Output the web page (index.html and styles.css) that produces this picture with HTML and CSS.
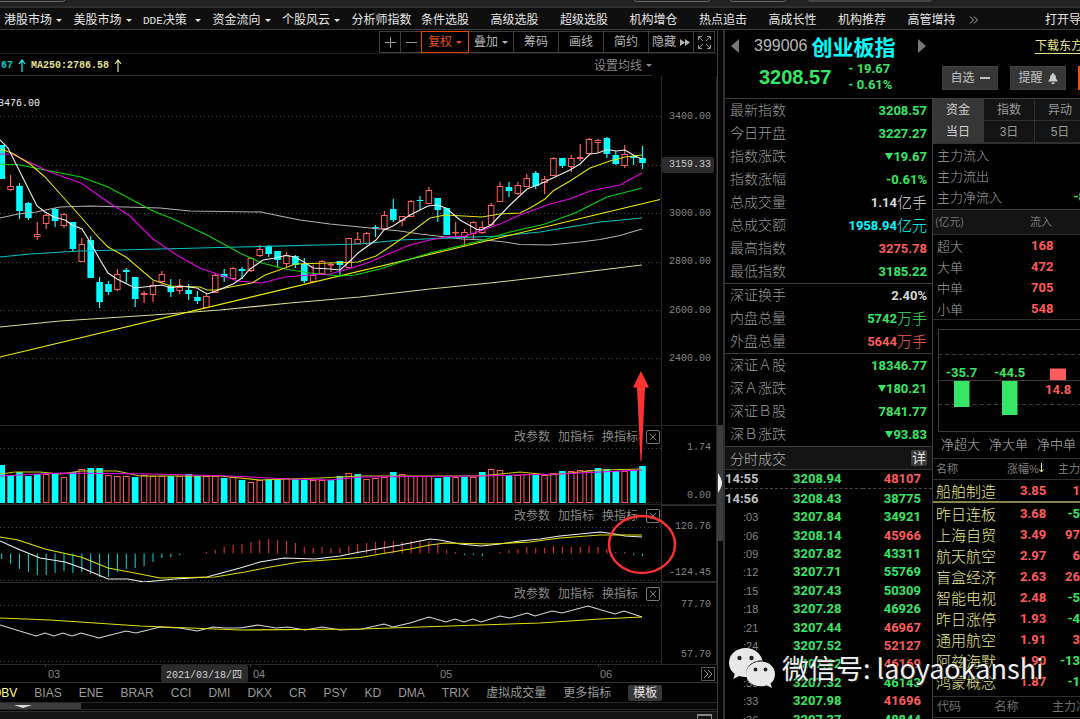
FILE: index.html
```html
<!DOCTYPE html>
<html lang="zh-CN">
<head>
<meta charset="utf-8">
<title>创业板指 399006</title>
<link rel="stylesheet" href="styles.css">
</head>
<body>
<div class="app">
  <div class="topstrip"><i class="notch notch-a"></i><i class="notch notch-b"></i><i class="notch notch-c"></i><i class="notch notch-d"></i></div>
  <nav class="nav">
    <ul class="nav-list">
      <li><a href="#">港股市场</a><i class="caret"></i></li>
      <li><a href="#">美股市场</a><i class="caret"></i></li>
      <li class="wide"><a href="#"><span class="mono">DDE</span>决策</a><i class="caret"></i></li>
      <li><a href="#">资金流向</a><i class="caret"></i></li>
      <li><a href="#">个股风云</a><i class="caret"></i></li>
      <li><a href="#">分析师指数</a></li>
      <li><a href="#">条件选股</a></li>
      <li><a href="#">高级选股</a></li>
      <li><a href="#">超级选股</a></li>
      <li><a href="#">机构增仓</a></li>
      <li><a href="#">热点追击</a></li>
      <li><a href="#">高成长性</a></li>
      <li><a href="#">机构推荐</a></li>
      <li class="last"><a href="#">高管增持</a>
        <svg class="more" viewBox="0 0 10 8"><path d="M1 0.5L4.5 4L1 7.5M5 0.5L8.5 4L5 7.5"/></svg></li>
    </ul>
    <a class="nav-open" href="#">打开导航</a>
  </nav>

  <main class="main">
    <section class="left">
      <div class="toolbar">
        <button class="tool sq" aria-label="放大"><svg viewBox="0 0 11 11"><path d="M5.5 0V11M0 5.5H11"/></svg></button>
        <button class="tool sq" aria-label="缩小"><svg viewBox="0 0 11 11"><path d="M0 5.5H11"/></svg></button>
        <button class="tool active">复权<i class="caret"></i></button>
        <button class="tool">叠加<i class="caret"></i></button>
        <button class="tool">筹码</button>
        <button class="tool">画线</button>
        <button class="tool">简约</button>
        <button class="tool">隐藏<svg class="ff" viewBox="0 0 10 7"><path d="M0 0L5 3.5L0 7ZM5 0L10 3.5L5 7Z"/></svg></button>
        <button class="tool sq" aria-label="全屏"><svg class="full" viewBox="0 0 13 13"><path d="M0.5 4V0.5H4M9 0.5H12.5V4M12.5 9V12.5H9M4 12.5H0.5V9M1 1L5 5M12 1L8 5M12 12L8 8M1 12L5 8"/></svg></button>
      </div>
      <div class="ma-row">
        <span class="ma ma-cyan">67</span><svg class="up up-cyan" viewBox="0 0 8 13"><path d="M4 13V1M1 5L4 1L7 5"/></svg>
        <span class="ma ma-pale">MA250:2786.58</span><svg class="up up-pale" viewBox="0 0 8 13"><path d="M4 13V1M1 5L4 1L7 5"/></svg>
        <button class="ma-set">设置均线<i class="caret"></i></button>
      </div>

      <div class="charts">
        <div class="panel">
          <div class="plot"><svg id="k" viewBox="0 76 661 349"></svg><span class="high mono">3476.00</span></div>
          <div class="axis axis-k mono"><span>3400.00</span><span class="tag">3159.33</span><span>3000.00</span><span>2800.00</span><span>2600.00</span><span>2400.00</span></div>
        </div>
        <div class="panel">
          <div class="plot"><svg id="v" viewBox="0 426 661 78"></svg>
            <div class="acts"><button>改参数</button><button>加指标</button><button>换指标</button><button class="x" aria-label="关闭"><svg viewBox="0 0 9 9"><path d="M1 1L8 8M8 1L1 8"/></svg></button></div></div>
          <div class="axis mono"><span>1.74</span><span>0.00</span></div>
        </div>
        <div class="panel">
          <div class="plot"><svg id="m" viewBox="0 505 661 77"></svg>
            <div class="acts"><button>改参数</button><button>加指标</button><button>换指标</button><button class="x" aria-label="关闭"><svg viewBox="0 0 9 9"><path d="M1 1L8 8M8 1L1 8"/></svg></button></div></div>
          <div class="axis selected mono"><span>120.76</span><span>-124.45</span></div>
        </div>
        <div class="panel">
          <div class="plot"><svg id="r" viewBox="0 583 661 81"></svg>
            <div class="acts"><button>改参数</button><button>加指标</button><button>换指标</button><button class="x" aria-label="关闭"><svg viewBox="0 0 9 9"><path d="M1 1L8 8M8 1L1 8"/></svg></button></div></div>
          <div class="axis axis-r mono"><span>77.70</span><span>57.70</span></div>
        </div>
        <svg class="marks" viewBox="0 76 661 588">
          <path d="M641 371L649 387.5H645L641.5 461H640.5L637 387.5H633Z" fill="#ff3232"/>
          <ellipse cx="642" cy="544.5" rx="33" ry="28.5" fill="none" stroke="#ff3232" stroke-width="2.4"/>
        </svg>
      </div>

      <div class="dates">
        <svg class="dates-plot" viewBox="0 665 661 17">
          <path d="M45.5 665V667M250.5 665V667M437.5 665V667M598.5 665V667" stroke="#444"/>
          <rect x="161" y="665" width="87" height="17" rx="2" fill="#2b2b2b"/>
          <text x="48" y="678">03</text><text x="253" y="678">04</text><text x="440" y="678">05</text><text x="600" y="678">06</text>
          <text x="166" y="678" class="picked">2021/03/18/四</text>
        </svg>
        <button class="next" aria-label="更多"><svg viewBox="0 0 10 8"><path d="M1 0L5 4L1 8M5 0L9 4L5 8"/></svg></button>
      </div>
      <div class="tabs">
        <button class="on">OBV</button><button>BIAS</button><button>ENE</button><button>BRAR</button><button>CCI</button><button>DMI</button><button>DKX</button><button>CR</button><button>PSY</button><button>KD</button><button>DMA</button><button>TRIX</button><button>虚拟成交量</button><button>更多指标</button><button class="tpl">模板</button>
      </div>
      <div class="hscroll"><div class="hthumb"><i class="caret"></i></div></div>
      <div class="bottom"><i class="winbox"></i></div>
    </section>

    <div class="vscroll"><div class="vthumb"><svg viewBox="0 0 4 20"><path d="M0 0C2 3 4 7 4 10S2 17 0 20Z"/></svg></div></div>

    <section class="side">
      <header class="quote">
        <div class="q-left">
          <div class="q-name"><i class="tri-l"></i><span class="code">399006</span><h1>创业板指</h1><i class="tri-r"></i></div>
          <div class="q-price"><strong>3208.57</strong><div class="chg"><span>- 19.67</span><span>- 0.61%</span></div></div>
        </div>
        <div class="q-right">
          <a class="dl" href="#">下载东方财富</a>
          <div class="q-btns"><button>自选<i class="minus"></i></button><button>提醒<svg viewBox="0 0 10 11"><path d="M5 0C5.800 0 6 .7 6 1.300C8 2 8 4 8 5.500L10 8.500H0L2 5.500C2 4 2 2 4 1.300C4 .7 4.200 0 5 0ZM3.500 9.500H6.500V11H3.500Z"/></svg></button><button class="hot" aria-label="交易"></button></div>
        </div>
      </header>

      <div class="cols">
        <div class="mid">
          <dl class="stats">
            <div><dt>最新指数</dt><dd class="g">3208.57</dd></div>
            <div><dt>今日开盘</dt><dd class="g">3227.27</dd></div>
            <div><dt>指数涨跌</dt><dd class="g"><i class="down"></i>19.67</dd></div>
            <div><dt>指数涨幅</dt><dd class="g">-0.61%</dd></div>
            <div><dt>总成交量</dt><dd>1.14<em>亿手</em></dd></div>
            <div><dt>总成交额</dt><dd class="c">1958.94<em>亿元</em></dd></div>
            <div><dt>最高指数</dt><dd class="r">3275.78</dd></div>
            <div><dt>最低指数</dt><dd class="g">3185.22</dd></div>
          </dl>
          <dl class="stats">
            <div><dt>深证换手</dt><dd>2.40%</dd></div>
            <div><dt>内盘总量</dt><dd class="g">5742<em>万手</em></dd></div>
            <div><dt>外盘总量</dt><dd class="r">5644<em>万手</em></dd></div>
          </dl>
          <dl class="stats">
            <div><dt>深证Ａ股</dt><dd class="g">18346.77</dd></div>
            <div><dt>深Ａ涨跌</dt><dd class="g"><i class="down"></i>180.21</dd></div>
            <div><dt>深证Ｂ股</dt><dd class="g">7841.77</dd></div>
            <div><dt>深Ｂ涨跌</dt><dd class="g"><i class="down"></i>93.83</dd></div>
          </dl>
          <div class="ticks-head"><h2>分时成交</h2><button>详</button></div>
          <table class="ticks">
            <tr class="dash"><th>14:55</th><td>3208.94</td><td class="r">48107</td></tr>
            <tr><th>14:56</th><td>3208.43</td><td>38775</td></tr>
            <tr><th class="s">:03</th><td>3207.84</td><td>34921</td></tr>
            <tr><th class="s">:06</th><td>3208.14</td><td class="r">45966</td></tr>
            <tr><th class="s">:09</th><td>3207.82</td><td>43311</td></tr>
            <tr><th class="s">:12</th><td>3207.71</td><td>55769</td></tr>
            <tr><th class="s">:15</th><td>3207.43</td><td>50309</td></tr>
            <tr><th class="s">:18</th><td>3207.28</td><td>46926</td></tr>
            <tr><th class="s">:21</th><td>3207.44</td><td class="r">46967</td></tr>
            <tr><th class="s">:24</th><td>3207.52</td><td class="r">52127</td></tr>
            <tr><th class="s">:27</th><td>3207.82</td><td class="r">46169</td></tr>
            <tr><th class="s">:30</th><td>3207.32</td><td>46143</td></tr>
            <tr><th class="s">:33</th><td>3207.98</td><td class="r">41696</td></tr>
            <tr><th class="s">:36</th><td>3207.37</td><td>48844</td></tr>
          </table>
        </div>

        <div class="far">
          <div class="grid-tabs">
            <button class="on">资金</button><button>指数</button><button>异动</button>
            <button class="on">当日</button><button>3日</button><button>5日</button>
          </div>
          <dl class="flows">
            <div><dt>主力流入</dt><dd></dd></div>
            <div><dt>主力流出</dt><dd></dd></div>
            <div><dt>主力净流入</dt><dd class="g">-8</dd></div>
          </dl>
          <table class="orders">
            <tr class="head"><th>(亿元)</th><th>流入</th><th></th></tr>
            <tr><th>超大</th><td>168</td><td></td></tr>
            <tr><th>大单</th><td>472</td><td></td></tr>
            <tr><th>中单</th><td>705</td><td></td></tr>
            <tr><th>小单</th><td>548</td><td></td></tr>
          </table>
          <div class="bars">
            <svg viewBox="0 0 143 103" width="143" height="103">
              <path d="M143 0.500H0.500V102.500H143M0 51.500H143" fill="none" stroke="#3c3c3c"/>
              <path d="M0 25.500H143M0 75.500H143" fill="none" stroke="#3c3c3c" stroke-dasharray="4 3"/>
              <path d="M16 52h15.500v26H16zM64 52h15.500v34H64z" fill="#38e666"/>
              <path d="M112 39.500h16v11.500h-16z" fill="#ff5c5c"/>
              <text x="8" y="48" fill="#38e666">-35.7</text><text x="56" y="48" fill="#38e666">-44.5</text><text x="107" y="65" fill="#ff5c5c">14.8</text>
            </svg>
            <div class="bar-names"><span>净超大</span><span>净大单</span><span>净中单</span></div>
          </div>
          <table class="sectors">
            <tr class="head"><th>名称</th><th>涨幅%<svg viewBox="0 0 5 10"><path d="M2.500 0V9M0.500 6.500L2.500 9L4.500 6.500"/></svg></th><th>主力</th></tr>
            <tr class="sel"><th>船舶制造</th><td>3.85</td><td>1</td></tr>
            <tr><th>昨日连板</th><td>3.68</td><td class="g">-5</td></tr>
            <tr><th>上海自贸</th><td>3.49</td><td>97</td></tr>
            <tr><th>航天航空</th><td>2.97</td><td>6</td></tr>
            <tr><th>盲盒经济</th><td>2.63</td><td>26</td></tr>
            <tr><th>智能电视</th><td>2.48</td><td class="g">-5</td></tr>
            <tr><th>昨日涨停</th><td>1.93</td><td class="g">-4</td></tr>
            <tr><th>通用航空</th><td>1.91</td><td>3</td></tr>
            <tr><th>阿兹海默</th><td>1.90</td><td class="g">-13</td></tr>
            <tr><th>鸿蒙概念</th><td>1.87</td><td class="g">-1</td></tr>
          </table>
          <div class="foot"><span>代码</span><span>名称</span><span>主力净</span></div>
        </div>
      </div>

      <div class="wechat">
        <svg viewBox="0 0 46 40">
          <path d="M17 0C7 0 0 6.600 0 15C0 19.500 2.200 23.200 5.800 26L4.300 31L10.200 28C12.300 28.700 14.600 29 17 29H18C15 19 23 12 33.500 12.500C31.500 5 25 0 17 0Z" fill="#e8e8e8"/>
          <path d="M32 13.500C23.500 13.500 17 19 17 26S23.500 38.300 32 38.300C34 38.300 36 38 37.500 37.300L43 40L41.500 35.500C44.500 33.300 46 30 46 26C46 19 40 13.500 32 13.500Z" fill="#e8e8e8"/>
          <g fill="#222"><circle cx="10.500" cy="10" r="2.200"/><circle cx="22.500" cy="10" r="2.200"/><circle cx="26.500" cy="21.500" r="1.900"/><circle cx="36.500" cy="21.500" r="1.900"/></g>
        </svg>
        <span>微信号: laoyaokanshi</span>
      </div>
    </section>
  </main>
</div>
<script src="chart.js"></script>
</body>
</html>
```

FILE: styles.css
```css
* { box-sizing: border-box; }
body { margin: 0; background: #000; color: #c0c0c0; font: 12px/16px "Liberation Sans", "Noto Sans CJK SC", sans-serif; }
button { margin: 0; padding: 0; border: 0; background: none; color: inherit; font: inherit; white-space: nowrap; cursor: pointer; }
a { color: inherit; text-decoration: none; }
ul, dl, dd, h1, h2 { margin: 0; padding: 0; font-weight: 400; }
svg { display: block; }
table { border-collapse: collapse; border-spacing: 0; }
th, td { padding: 0; font-weight: 400; text-align: left; white-space: nowrap; }
.mono { font-family: "Liberation Mono", "Noto Sans CJK SC", monospace; font-size: 10px; }
.g { color: #38e666; }
.r { color: #ff5c5c; }
.c { color: #00ffff; }

.app { height: 100vh; overflow: hidden; display: flex; flex-direction: column; }
.topstrip { flex: none; height: 8px; background: #222; border-bottom: 2px solid #303030; position: relative; }
.notch { position: absolute; top: -8px; height: 10px; border: 1px solid #666; border-radius: 5px; }
.notch-a { left: -10px; width: 77px; }
.notch-b { left: 632px; width: 80px; }
.notch-c { left: 728px; width: 60px; }
.notch-d { left: 806px; width: 128px; background: #444; border-color: #444; }

.nav { flex: none; height: 22px; display: flex; align-items: center; background: #0e0e0e; border-bottom: 1px solid #3c3c3c; padding: 3px 0 0 4px; color: #e4e4e4; overflow: hidden; }
.nav-list { flex: 1; display: grid; grid-template-columns: repeat(14, minmax(0, 1fr)); list-style: none; }
.nav li { display: flex; align-items: center; gap: 4px; white-space: nowrap; }
.nav .wide { gap: 8px; }
.nav .last { gap: 13px; }
.nav .mono { font-size: 11px; }
.nav-open { width: 35px; margin-left: 68px; white-space: nowrap; }
.more { width: 10px; height: 8px; flex: none; fill: none; stroke: #aaa; }
.caret { display: inline-block; flex: none; border: 3px solid transparent; border-top-color: currentColor; border-bottom: 0; }

.main { flex: 1; min-height: 0; display: grid; grid-template-columns: minmax(0, 1fr) 8px 355px; }
.left { min-width: 0; overflow: hidden; }

.toolbar { display: flex; justify-content: flex-end; height: 24px; padding: 1px 2px 1px 0; border-bottom: 1px solid #1c1c1c; }
.tool { width: 46px; height: 22px; display: flex; align-items: center; justify-content: center; gap: 4px; border: 1px solid #3c3c3c; margin-right: -1px; color: #b4b4b4; }
.tool:last-child { margin-right: 0; }
.tool.sq { width: 22px; }
.tool.sq svg { width: 11px; height: 11px; fill: none; stroke: #999; }
.tool.sq .full { width: 13px; height: 13px; }
.tool.active { width: 48px; border-color: #e04800; color: #e85020; position: relative; }
.tool .ff { width: 10px; height: 7px; fill: #b4b4b4; }

.ma-row { display: flex; align-items: center; height: 22px; margin-right: 65px; padding-top: 2px; border-bottom: 1px solid #303030; }
.ma { font: 700 10px/16px "Liberation Mono", monospace; }
.ma-cyan { color: #00c8c8; padding-left: 1px; }
.ma-pale { color: #e0e090; margin-left: 5px; }
.up { width: 8px; height: 13px; margin-left: 5px; fill: none; stroke-width: 1.2; }
.up-cyan { stroke: #00ffff; }
.up-pale { stroke: #e0e090; }
.ma-set { margin-left: auto; display: flex; align-items: center; gap: 4px; color: #888; }

.charts { position: relative; }
.panel { display: grid; grid-template-columns: minmax(0, 1fr) 56px; border-bottom: 1px solid #262626; }
.plot { position: relative; }
.plot > svg, .dates-plot { width: 100%; height: auto; }
.high { position: absolute; left: -2px; top: 20px; color: #f0f0f0; }
.axis { display: flex; flex-direction: column; justify-content: space-between; align-items: flex-end; padding: 14px 5px 0 0; color: #858585; border: 0 solid #262626; border-width: 0 1px; }
.axis-k { padding-top: 33px; padding-bottom: 58px; }
.axis-r { padding-bottom: 1px; }
.axis.selected { border: 1px solid #303030; padding-top: 13px; }
.tag { background: #2c2c2c; color: #c8c8c8; border-radius: 2px; margin-right: -3px; padding: 0 3px 0 7px; }
.acts { position: absolute; right: 1px; top: 3px; display: flex; align-items: center; gap: 8px; color: #888; }
.acts .x { width: 14px; height: 14px; border: 1px solid #777; border-radius: 2px; padding: 2px; }
.acts .x svg { width: 8px; height: 8px; fill: none; stroke: #888; }
.marks { position: absolute; left: 0; top: 0; width: calc(100% - 56px); overflow: visible; pointer-events: none; }

.dates { display: grid; grid-template-columns: minmax(0, 1fr) 56px; border-bottom: 1px solid #303030; align-items: center; }
.dates text { font: 11px "Liberation Sans", sans-serif; fill: #858585; }
.dates .picked { font: 10px "Liberation Mono", "Noto Sans CJK SC", monospace; fill: #d0d0d0; }
.next { justify-self: end; width: 14px; height: 14px; margin-right: 2px; padding: 2px 1px; border: 1px solid #555; }
.next svg { width: 10px; height: 8px; fill: none; stroke: #999; }
.tabs { display: flex; align-items: center; gap: 17px; height: 20px; border-bottom: 1px solid #262626; color: #999; margin-left: -8px; overflow: hidden; }
.tabs .on { color: #ffff80; }
.tabs .tpl { background: #363636; color: #e0e0e0; border-radius: 2px; padding: 0 5px; }
.hscroll { height: 7px; background: #080808; border-bottom: 1px solid #262626; }
.hthumb { width: 81px; height: 6px; background: #3c3c3c; padding-left: 14px; display: flex; align-items: center; color: #ddd; }
.hthumb .caret { border-left-width: 9px; border-right-width: 9px; }
.bottom { height: 16px; background: #141414; border-top: 1px solid #303030; margin-top: 1px; display: flex; justify-content: flex-end; padding: 2px 5px 0 0; }
.winbox { width: 15px; height: 12px; border: 1px solid #888; border-top-width: 2px; }

.vscroll { background: #050505; border-left: 1px solid #3c3c3c; border-right: 2px solid #303030; display: flex; flex-direction: column; justify-content: flex-start; padding-top: 395px; overflow: hidden; }
.vthumb { height: 116px; flex: none; background: #3c3c3c; display: flex; align-items: center; }
.vthumb svg { width: 4px; height: 20px; fill: #eee; }

.side { position: relative; min-width: 0; overflow: hidden; display: flex; flex-direction: column; }
.quote { display: flex; justify-content: space-between; height: 69px; flex: none; border-bottom: 1px solid #3c3c3c; }
.q-name { display: flex; align-items: center; height: 32px; padding-left: 6px; }
.tri-l, .tri-r { border: 7px solid transparent; border-left-width: 0; border-right: 8px solid #777; }
.tri-r { border-left: 8px solid #777; border-right-width: 0; margin-left: 23px; }
.code { font-size: 16px; margin: 0 4px 0 15px; color: #b8b8b8; }
.q-name h1 { font: 700 21px/28px "Noto Sans CJK SC", sans-serif; color: #00ffff; }
.q-price { display: flex; align-items: center; gap: 17px; padding-left: 34px; color: #38e666; height: 29px; }
.q-price strong { font-size: 20px; line-height: 24px; }
.chg { font: 700 13px/16px Roboto, sans-serif; display: flex; flex-direction: column; }
.q-right { width: 138px; padding-top: 8px; white-space: nowrap; }
.dl { display: block; margin-left: 93px; color: #e6e68c; text-decoration: underline; text-underline-offset: 3px; }
.q-btns { display: flex; gap: 12px; margin-top: 12px; }
.q-btns button { flex: none; width: 56px; height: 24px; background: #363636; border: 1px solid #404040; color: #c0c0c0; display: flex; align-items: center; justify-content: center; gap: 5px; }
.q-btns button.hot { background: #f05000; border-color: #f05000; }
.q-btns svg { width: 10px; height: 11px; fill: #c8c8c8; }
.minus { width: 10px; height: 2px; background: #c0c0c0; }

.cols { flex: 1; min-height: 0; display: grid; grid-template-columns: 208px minmax(0, 1fr); }
.mid { border-right: 1px solid #3c3c3c; overflow: hidden; }
.stats { border-bottom: 1px solid #3c3c3c; padding: 0 5px; }
.stats div { display: flex; justify-content: space-between; align-items: center; height: 23px; }
.stats dt { font-family: "Noto Sans CJK SC", sans-serif; font-size: 14px; font-weight: 300; color: #9a9a9a; padding-bottom: 3px; }
.stats dd { font: 700 13px/20px Roboto, "Noto Sans CJK SC", sans-serif; display: flex; align-items: center; }
.stats dd:not([class]) { color: #d8d8d8; }
.stats em { font: 300 15px/20px "Noto Sans CJK SC", sans-serif; padding-bottom: 2px; }
.down { border: 4px solid transparent; border-top: 7px solid currentColor; border-bottom: 0; }
.ticks-head { display: flex; justify-content: space-between; align-items: center; height: 23px; padding: 0 5px; background: #141414; border-bottom: 1px solid #303030; }
.ticks-head h2 { font: 300 14px/20px "Noto Sans CJK SC", sans-serif; color: #b4b4b4; }
.ticks-head button { background: #3c3c3c; color: #ddd; width: 16px; height: 16px; font-size: 14px; line-height: 16px; border-radius: 2px; }
.ticks { width: 100%; height: 259px; font: 700 13px/16px Roboto, sans-serif; color: #38e666; }
.ticks th { font-weight: 700; color: #c0c0c0; width: 68px; }
.ticks td { font-weight: 700; }
.ticks th.s { font: 300 11px/16px "Liberation Sans", sans-serif; color: #858585; padding-left: 18px; }
.ticks td:last-child { text-align: right; padding-right: 11px; }
.dash { border-bottom: 1px dashed #444; }

.far { overflow: hidden; }
.grid-tabs { display: grid; grid-template-columns: repeat(3, 51px); border-bottom: 1px solid #303030; }
.grid-tabs button { height: 22px; background: #141414; color: #999; border: 1px solid #303030; border-width: 0 1px 1px 0; }
.grid-tabs button.on { background: #363636; border-color: #363636; color: #d0d0d0; }
.flows { padding-bottom: 2px; padding-left: 4px; border-bottom: 1px solid #3c3c3c; }
.flows div { display: flex; justify-content: space-between; height: 21px; align-items: center; font: 300 13px/20px "Noto Sans CJK SC", sans-serif; color: #a0a0a0; }
.flows .g { font: 700 13px/20px Roboto, sans-serif; margin-right: -6px; }
.orders { width: 100%; border-bottom: 1px solid #303030; font: 300 13px/21px "Noto Sans CJK SC", sans-serif; color: #a0a0a0; }
.orders th { font-weight: 300; }
.orders th:first-child { padding-left: 4px; width: 94px; }
.orders td { font: 700 13px/21px Roboto, sans-serif; color: #ff5c5c; padding-left: 4px; }
.orders .head { height: 24px; background: #141414; border-bottom: 1px solid #303030; font-size: 11px; }
.orders .head th:first-child { padding-left: 2px; }
.orders .head th { padding-left: 3px; }
.bars { padding: 9px 0 3px 5px; border-bottom: 1px solid #303030; }
.bars svg { overflow: visible; }
.bars text { font: 700 13px Roboto, sans-serif; }
.bar-names { display: flex; gap: 9px; padding-left: 3px; margin-top: 1px; font: 300 13px/22px "Noto Sans CJK SC", sans-serif; color: #b4b4b4; white-space: nowrap; }
.sectors { width: 100%; table-layout: fixed; }
.sectors .head { height: 21px; color: #808080; border-bottom: 1px solid #303030; font-size: 11px; }
.sectors .head th:last-child { text-align: right; }
.sectors .head svg { display: inline-block; width: 5px; height: 10px; fill: none; stroke: #e6e68c; }
.sectors th:first-child { padding-left: 3px; width: 74px; }
.sectors tr:not(.head) th { font: 300 15px/21px "Noto Sans CJK SC", sans-serif; color: #e6e68c; }
.sectors td { font: 700 13px/21px Roboto, sans-serif; color: #ff5c5c; }
.sectors td:nth-child(2) { padding-left: 13px; }
.sectors td:last-child { text-align: right; }
.sectors td.g { color: #38e666; }
.sectors .sel { border-bottom: 2px solid #84844a; }
.foot { display: flex; justify-content: space-between; height: 22px; align-items: center; margin: 4px -8px 0 0; padding-left: 4px; color: #707070; border: 1px solid #303030; border-width: 1px 0; white-space: nowrap; }

.wechat { position: absolute; left: 4px; bottom: 31px; display: flex; align-items: center; gap: 7px; color: #f0f0f0; font: 27px/38px "Noto Sans CJK SC", sans-serif; white-space: nowrap; text-shadow: 0 0 2px #000, 1px 1px 1px #333; }
.wechat svg { width: 46px; height: 40px; }
```

FILE: chart.js
```js
const NS = 'http://www.w3.org/2000/svg';
const X = i => 1.4 + 8.9 * i;
const RED = '#ff5c5c', CYAN = '#00ffff';

function add(id, name, attrs) {
  const el = document.createElementNS(NS, name);
  for (const k in attrs) el.setAttribute(k, attrs[k]);
  document.getElementById(id).appendChild(el);
}
function line(id, color, points) {
  add(id, 'polyline', { points, fill: 'none', stroke: color, 'stroke-width': 1.1 });
}
function grid(id, ys) {
  ys.forEach(y => add(id, 'path', { d: `M0 ${y}H661`, stroke: '#484848', 'stroke-dasharray': '1 3' }));
}
function box(id, i, top, bottom, up) {
  const h = Math.max(bottom - top, 1);
  if (up) add(id, 'rect', { x: X(i) - 2.5, y: top + .5, width: 5.5, height: Math.max(h - 1, .5), fill: '#000', stroke: RED });
  else add(id, 'rect', { x: X(i) - 3, y: top, width: 6.6, height: h, fill: CYAN });
}

/* direction, body top, body bottom, high, low */
const candles = `d145,179,145,179 r186,190,175,191 d186,211,183,219 d203,218,202,220 r234,237,222,240 r215,224,214,229
d209,221,208,227 r214,226,213,228 d222,249,222,251 r244,262,238,262 d240,278,236,278 d282,302,277,308 d284,292,281,295
r274,290,269,291 d270,272,268,283 d277,299,277,307 r293,295,291,303 r285,295,281,302 r274,282,271,283 d286,292,279,297
r287,291,279,294 d290,294,284,300 d297,301,291,304 r296,308,294,308 r275,293,273,293 d274,277,269,282 r268,279,267,280
d269,271,267,279 r258,271,257,272 r249,256,245,257 d246,254,245,257 d251,260,251,267 r255,264,252,267 d256,265,255,268
d264,281,258,283 r275,282,265,282 r261,274,260,274 r264,265,262,272 d261,265,261,275 r238,268,238,269 r239,244,232,244
r233,244,232,245 d227,228,225,237 r215,229,211,229 d209,220,199,222 r216,221,216,226 r201,217,200,217 d200,201,196,210
r190,204,187,204 d198,210,198,222 d208,235,208,235 r232,233,222,237 r232,237,229,246 r222,234,221,240 r227,233,221,234
r205,225,203,226 r186,202,182,202 d187,191,182,197 r185,194,182,195 r178,187,174,187 d173,186,171,189 r179,183,176,194
r158,176,157,176 d158,166,158,168 r158,167,155,172 r157,159,144,161 r139,154,138,154 r140,143,139,153 d138,154,137,158
d155,164,151,165 r154,166,145,168 d156,158,155,165 d158,163,146,169`.split(/\s+/);

grid('k', [116.5, 165.5, 213.5, 262.5, 310.5, 358.5]);
candles.forEach((c, i) => {
  const up = c[0] === 'r';
  const [t, b, hi, lo] = c.slice(1).split(',').map(Number);
  add('k', 'path', { d: `M${X(i) + .3} ${hi}V${lo}`, stroke: up ? RED : CYAN, 'stroke-width': 1.2 });
  box('k', i, t, b, up);
});
line('k', '#b0b0b0', '0,218 18,214 36,212 60,207 90,206 160,208 190,211 261,212 280,216 300,220 330,224 370,228 400,231 420,234 446,237 462,239 485,240 505,242 520,244.5 550,245 580,242 600,239.5 620,235.5 642,229');
line('k', '#00c0c0', '0,257 30,254 80,251 240,247 320,245 360,244 400,240 450,238 500,236 540,232 600,222 642,218');
line('k', '#d8d890', '0,327 60,321 153,315 220,310 290,303 360,297 430,289 490,283 560,275 642,265');
line('k', '#f0f000', '0,357 660,199.5');
line('k', '#00d800', '0,164 20,165 45,170 81,177 108,187 153,211 171,218 207,235 240,253 262,263 285,269 310,273 340,276 355,275 380,269 410,259 430,253 480,241 510,232 545,224 575,213 607,197 642,188');
line('k', '#e800e8', '0,154 12,154 50,172 81,183 108,202 130,216 153,239 180,257 200,268 220,275 238,281 262,283 285,277 310,275 330,274 355,267 370,262 388,254 410,245 430,240 445,237 465,236 480,231 500,224 520,215 550,204 570,199 590,191 620,185 642,173');
line('k', '#e0e000', '0,149 12,153 30,164 45,177 63,197 81,217 99,238 108,247 126,257 153,280 171,286 200,287 207,290 216,290 230,287 252,283 265,275 285,268 295,264 330,263 358,262 376,256 388,248 410,233 430,218 445,215 482,217 500,214 520,213 530,208 545,199 553,191 570,181 590,168 610,161 625,157 642,155');
line('k', '#f0f0f0', '0,140 8,148 37,206 45,212 54,217 65,220 72,225 82,229 90,242 99,258 108,273 117,279 135,288 162,285 171,288 180,286 197,288 207,294 216,291 233,284 242,278 250,269 263,260 275,258 286,255.5 295,257 304,262 313,268 330,269 340,270 349,262 358,253 376,240 384,230 393,226 410,215 428,206 437,205 446,208 460,220 476,229 481,230 491,225 510,205 527,189 540,184 555,177 570,170 580,164 590,154 598,153 607,149.5 616,151 625,150 635,156 642,159');

const volDir = 'cccccrcrcrccrrrcrrrcrccrrcrcrrccrccrrccrcrrrcrrrrccrcrcrrcrrcrrcrrrcccrcc';
const volTop = [465,475,472,476,474,474,474,477,472,469,468,468,475,476,476,477,475,476,476,476,476,474,476,476,476,478,477,480,482,480,479,479,478,479,480,480,480,480,476,473,474,479,478,477,472,474,476,476,476,478,477,477,477,477,472,469,470,475,475,474,475,475,473,471,471,470,470,468,469,471,471,470,466];
grid('v', [448.5, 502.5]);
volTop.forEach((t, i) => box('v', i, t, 503, volDir[i] === 'r'));
line('v', '#c8c800', '0,474 15,472 40,472 60,474 81,471 117,471 140,476 220,476 260,480 320,478 360,476 480,476 500,474 520,472 550,475 600,470 642,469');
line('v', '#e800e8', '0,476 60,473 150,474 230,476 290,479 330,480 360,477 480,476 560,474 600,472 642,470');

const hist = [559,564,569,572,575,575,573,571,573,572,574,577,577,572,569,568,566,562,558,557,555,0,0,552,550,547,545,544,542,540,539,540,541,543,547,548,547,548,548,546,544,543,542,541,541,542,541,541,541,544,550,552,555,555,556,0,552,550,549,547,548,548,546,547,547,547,546,547,549,552,552,555,556];
grid('m', [527.5, 580.5]);
hist.forEach((y, i) => {
  if (y) add('m', 'path', { d: `M${X(i) + .3} 553.5V${y}`, stroke: y > 553 ? '#00c8c8' : '#e03030', 'stroke-width': 1.1 });
});
line('m', '#f0f0f0', '0,541 18,549 40,558 65,562 82,568 108,579 128,579 144,582 175,579 207,577 225,572 240,568 260,562 284,558 315,559 340,556 360,552 400,545 430,539 440,540 460,544 481,546 500,544 520,541 540,539 560,536 580,534 600,532 615,534 625,536 642,537');
line('m', '#e0e000', '0,537 18,540 45,549 81,557 108,568 135,573 160,578 215,577 245,572 270,567 300,562 340,559 360,557.5 410,549 430,545 445,543 490,544 530,542 560,538 600,535 642,535');

grid('r', [605.5, 661.5]);
line('r', '#d8d8d8', '0,625 36,636 45,633 54,636 63,633 72,636 81,633 99,638 126,631 136,633 160,627 180,628 197,631 213,627 225,628 240,628 258,625 276,628 288,627 305,630 322,627 340,630 362,629 384,624 393,627 410,623 429,617 446,622 455,619 464,622 473,619 481,622 500,616 510,618 527,613 535,616 552,611 562,613 588,606 615,614 624,611 642,617');
line('r', '#e0e000', '0,618 50,620 140,626 240,630 360,629 450,626 540,623 600,619 642,617');
```
